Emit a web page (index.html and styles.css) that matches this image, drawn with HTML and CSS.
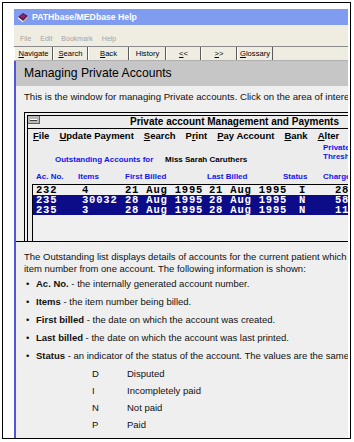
FILE: index.html
```html
<!DOCTYPE html>
<html>
<head>
<meta charset="utf-8">
<link rel="stylesheet" href="styles.css">
</head>
<body>
<div class="frame">
  <div class="window">
    <div class="titlebar">
      <svg class="appicon" viewBox="0 0 12 12" width="12" height="12">
        <polygon points="1,6 6,2 11,5 6,10" fill="#5a1850"/>
        <polygon points="1,6 6,10 6,11.5 1,7.5" fill="#f4f0e8"/>
        <polygon points="6,10 11,5 11,6.5 6,11.5" fill="#c8b8a0"/>
        <polygon points="3,5.6 6,3.2 9,5 6,7.6" fill="#8a2a6a"/>
      </svg>
      <span class="title">PATHbase/MEDbase Help</span>
    </div>
    <div class="menubar">
      <span>File</span><span>Edit</span><span>Bookmark</span><span>Help</span>
    </div>
    <div class="toolbar">
      <span class="btn w39"><u>N</u>avigate</span>
      <span class="btn w35"><u>S</u>earch</span>
      <span class="btn w41"><u>B</u>ack</span>
      <span class="btn w37">History</span>
      <span class="btn w35"><u>&lt;</u>&lt;</span>
      <span class="btn w36"><u>&gt;</u>&gt;</span>
      <span class="btn w36"><u>G</u>lossary</span>
    </div>
    <div class="page">
      <div class="heading">Managing Private Accounts</div>
      <p class="intro">This is the window for managing Private accounts. Click on the area of interest</p>
      <div class="shot">
        <div class="shot-inner">
          <div class="app-title">
            <span class="sysbox"><span class="dash"></span></span>
            <span class="app-title-text">Private account Management and Payments</span>
          </div>
          <div class="app-menu">
            <span><u>F</u>ile</span>
            <span><u>U</u>pdate Payment</span>
            <span><u>S</u>earch</span>
            <span>P<u>r</u>int</span>
            <span><u>P</u>ay Account</span>
            <span><u>B</u>ank</span>
            <span><u>A</u>lter</span>
          </div>
          <div class="acct-row">
            <span></span>
            <span class="blue lbl">Outstanding Accounts for</span>
            <span class="lbl">Miss Sarah Caruthers</span>
            <span class="blue side">Private<br>Threshold</span>
          </div>
          <div class="cols blue">
            <span>Ac. No.</span><span>Items</span><span>First Billed</span><span>Last Billed</span><span>Status</span><span>Charge</span>
          </div>
          <div class="listbox">
            <div class="row"><span>232</span><span>4</span><span>21 Aug 1995</span><span>21 Aug 1995</span><span>I</span><span>28.00</span></div>
            <div class="row sel"><span>235</span><span>30032</span><span>28 Aug 1995</span><span>28 Aug 1995</span><span>N</span><span>58.00</span></div>
            <div class="row sel"><span>235</span><span>3</span><span>28 Aug 1995</span><span>28 Aug 1995</span><span>N</span><span>11.00</span></div>
          </div>
        </div>
      </div>
      <div class="doc">
        <p class="para">The Outstanding list displays details of accounts for the current patient which</p>
        <p class="para">item number from one account. The following information is shown:</p>
        <div class="bl"><span class="dot">&bull;</span><span><b>Ac. No.</b> - the internally generated account number.</span></div>
        <div class="bl"><span class="dot">&bull;</span><span><b>Items</b> - the item number being billed.</span></div>
        <div class="bl"><span class="dot">&bull;</span><span><b>First billed</b> - the date on which the account was created.</span></div>
        <div class="bl"><span class="dot">&bull;</span><span><b>Last billed</b> - the date on which the account was last printed.</span></div>
        <div class="bl"><span class="dot">&bull;</span><span><b>Status</b> - an indicator of the status of the account. The values are the same</span></div>
        <div class="codes">
          <span>D</span><span>Disputed</span>
          <span>I</span><span>Incompletely paid</span>
          <span>N</span><span>Not paid</span>
          <span>P</span><span>Paid</span>
        </div>
      </div>
    </div>
  </div>
</div>
</body>
</html>
```
FILE: styles.css
```css
* { box-sizing: border-box; margin: 0; padding: 0; }
html, body { width: 354px; height: 442px; background: #fff; overflow: hidden; }
body { font-family: "Liberation Sans", Arial, sans-serif; color: #111; }

.frame {
  margin: 2px 0 0 2px;
  width: 349px;
  height: 437px;
  border: 1px solid #000;
  padding: 6px 2px 0 11px;
  display: flex;
}
.window { flex: 1; min-width: 0; display: flex; flex-direction: column; overflow: hidden; }

.titlebar {
  flex: none; height: 16px; background: #809cf0;
  display: flex; align-items: center; gap: 3px; padding-left: 3px;
}
.appicon { flex: none; }
.title { color: #fff; font-weight: bold; font-size: 8.7px; white-space: nowrap; }

.menubar {
  flex: none; height: 21px; background: #efede2;
  display: flex; align-items: flex-end; gap: 9px;
  padding: 0 0 3px 6px;
  font-size: 7px; line-height: 8px; color: #a4a4a4;
}

.toolbar {
  flex: none; height: 15px; background: #efede2;
  border-top: 1px solid #8a8a8a; border-bottom: 1px solid #b0b0b0;
  display: flex;
}
.btn {
  display: flex; align-items: center; justify-content: center;
  font-size: 7.6px; color: #000; white-space: nowrap;
  border-left: 1px solid #fff; border-right: 1px solid #5a5a5a;
}
.w35 { width: 35px; } .w36 { width: 36px; } .w37 { width: 37px; }
.w39 { width: 39px; } .w41 { width: 41px; }

.page {
  flex: 1; min-height: 0;
  border-left: 2px solid #5058d8;
  background: #efefef;
  display: flex; flex-direction: column; overflow: hidden;
}
.heading {
  flex: none; height: 25px; background: #c6c6c6;
  font-size: 12.2px; line-height: 25px; padding-left: 8px; white-space: nowrap; color: #000;
}
.intro {
  flex: none; margin-top: 5px; padding-left: 8px;
  font-size: 9.6px; line-height: 12px; white-space: nowrap;
}

.shot {
  flex: none; height: 129px; margin: 9px 0 0 8px;
  border-top: 1px solid #000; border-left: 1px solid #000;
  padding: 2px 0 0 2px; overflow: hidden;
}
.shot-inner {
  height: 140px; width: 340px;
  border-top: 1px solid #000; border-left: 1px solid #000;
  background: #ececec;
  display: flex; flex-direction: column;
}
.app-title {
  flex: none; height: 13px; border-bottom: 1px solid #000;
  display: flex; align-items: flex-start;
}
.sysbox {
  flex: none; width: 12px; height: 8px; background: #b8b8b8;
  border-right: 1px solid #606060; border-bottom: 1px solid #606060;
  display: flex; align-items: center; justify-content: center;
}
.dash { width: 7px; height: 2px; background: #404040; border-top: 1px solid #fff; }
.app-title-text {
  margin-left: 90px; font-weight: bold; font-size: 10px; line-height: 12px;
  white-space: nowrap; color: #000;
}
.app-menu {
  flex: none; height: 14px; display: flex; gap: 10px; padding-left: 5px;
  font-weight: bold; font-size: 9.5px; line-height: 14px; white-space: nowrap; color: #000;
}
.acct-row {
  flex: none; height: 21px;
  display: grid; grid-template-columns: 27px 110px 158px 60px;
  font-weight: bold; font-size: 8px; line-height: 9px; white-space: nowrap;
}
.lbl { align-self: end; color: #000; }
.blue, .blue.lbl { color: #1414f0; }
.side { align-self: start; }
.cols {
  flex: none; height: 9px; margin-top: 8px; padding-left: 8px;
  display: grid; grid-template-columns: 42px 47px 82px 76px 40px 40px;
  font-weight: bold; font-size: 8px; line-height: 9px; white-space: nowrap;
}
.listbox {
  flex: 1; margin: 3px 0 0 4px;
  border-top: 1px solid #000; border-left: 1px solid #000;
  background: #f0f0f0;
}
.row {
  height: 10px; padding-left: 3px;
  display: grid; grid-template-columns: 46px 43px 84px 90px 36px 60px;
  font-family: "Liberation Mono", "Courier New", monospace; font-weight: bold;
  font-size: 10.5px; letter-spacing: 0.8px; line-height: 10px; white-space: nowrap; color: #000;
  overflow: hidden;
}
.row.sel { background: #0c0c88; color: #fff; }

.doc {
  flex: 1; border-top: 1px solid #000;
  padding: 9px 0 0 8px;
  font-size: 9.5px; line-height: 12px; white-space: nowrap; color: #111;
}
.para { height: 12px; }
.bl { display: flex; height: 18px; line-height: 18px; }
.dot { width: 12px; padding-left: 2px; flex: none; }
.codes {
  display: grid; grid-template-columns: 35px auto;
  padding-left: 68px; line-height: 17px;
}
```
